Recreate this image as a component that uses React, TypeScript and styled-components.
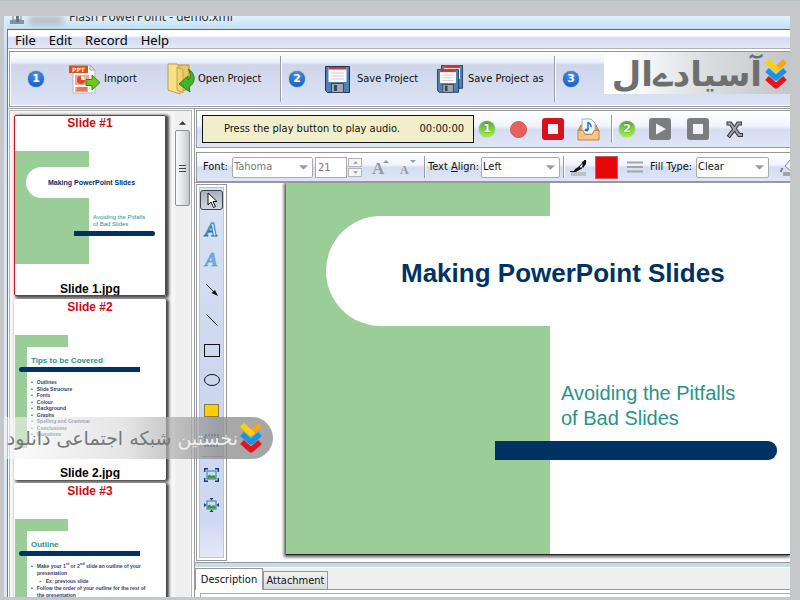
import React from "react";
import styled, { createGlobalStyle, css } from "styled-components";

const GREEN = "#9bcd98";
const NAVY = "#003264";
const TEAL = "#2a9388";
const LINE = "#96989e";
const UI = '"DejaVu Sans Condensed", "Noto Sans", sans-serif';

const GlobalStyle = createGlobalStyle`
  * { box-sizing: border-box; }
  html, body { margin: 0; }
  body { background: #c6c7c9; font: 12px/16px "Noto Sans", sans-serif; color: #111; }
  button, input, select { font: inherit; color: inherit; margin: 0; }
  button { border: 0; padding: 0; background: none; }
`;

const Backdrop = styled.div`
  height: 100vh;
  display: flex;
  padding: 16px 10px 3px 4px;
  border-top: 1px solid #b6bfc2;
  background: #c6c7c9;
`;

const Window = styled.div`
  position: relative;
  flex: 1;
  min-width: 0;
  display: flex;
  flex-direction: column;
  padding-left: 3px;
  margin-top: -1px;
  overflow: hidden;
  background: linear-gradient(#dceefa, #c3dcf2 8%, #dbe7f3 30%, #dbe7f3);
`;

const TitleBar = styled.header`
  flex: none;
  display: flex;
  align-items: flex-end;
  height: 13px;
  padding: 0 3px 4px;
  overflow: hidden;
  font-size: 12px;
  background: linear-gradient(#dff2fb, #c5def2);
  h1 { margin: 0; font: inherit; color: #333; white-space: nowrap; }
  svg { margin-bottom: 1px; }
`;

const Redacted = styled.span`
  width: 34px;
  height: 9px;
  margin: 0 6px 0 5px;
  background: #b3bcc4;
  filter: blur(3px);
`;

const Body = styled.div`
  flex: 1;
  min-height: 0;
  display: flex;
  flex-direction: column;
  border-left: 1px solid #6f7b80;
  border-top: 1px solid #5b6a6c;
  background: #fff;
`;

const Menu = styled.nav`
  flex: none;
  display: flex;
  gap: 13px;
  height: 19px;
  padding-left: 7px;
  border-bottom: 1px solid #b0b2b8;
  background: linear-gradient(#fff 0 30%, #d6dcef 45%, #e3e8f6);
  button { font: 13px/20px "Noto Sans", sans-serif; color: #000; }
`;

const Ribbon = styled.div`
  flex: none;
  display: flex;
  align-items: center;
  height: 56px;
  margin: 2px 0 0 1px;
  padding-left: 18px;
  border: 1px solid ${LINE};
  border-right: 0;
  box-shadow: inset 1px 1px #fff, inset 0 -1px #fff;
  background: linear-gradient(#fff, #edf0f9 18%, #cfd6e9 24%, #d3dbef 55%, #dfe4f4);
`;

const Divider = styled.span<{ $h: number }>`
  flex: none;
  width: 2px;
  height: ${(p) => p.$h}px;
  border-left: 1px solid #9b9da3;
  background: #fff;
`;

const Step = styled.span`
  flex: none;
  width: 16px;
  height: 16px;
  border-radius: 50%;
  text-align: center;
  font: bold 11px/16px "DejaVu Sans", sans-serif;
  color: #fff;
  background: radial-gradient(circle at 50% 25%, #4d93e0, #1a64c4 75%);
  box-shadow: 0 0 1px #1b4f9a;
`;

const GreenStep = styled(Step)`
  text-shadow: 0 0 2px #2b7a10;
  background: linear-gradient(#58a83a, #7fd24a 50%, #a5f52c);
  box-shadow: 0 0 1px #4a8b35;
`;

const RibbonButton = styled.button<{ $w: number; $gap: number }>`
  flex: none;
  display: flex;
  align-items: center;
  gap: ${(p) => p.$gap}px;
  width: ${(p) => p.$w}px;
  font: 11px/16px ${UI};
  white-space: nowrap;
  svg { flex: none; }
`;

const Spacer = styled.span<{ $w: number }>`
  flex: none;
  width: ${(p) => p.$w}px;
`;

const Brand = styled.div`
  flex: 1;
  align-self: flex-start;
  display: flex;
  align-items: center;
  justify-content: flex-end;
  gap: 3px;
  height: 42px;
  padding: 2px 3px 0 0;
  overflow: hidden;
  background: linear-gradient(90deg, #fff 10%, #dcdde0 55%, #c3c6ca);
  span { font: bold 34px/40px "DejaVu Sans", sans-serif; color: #6d6e70; white-space: nowrap; }
  svg { flex: none; }
`;

const Main = styled.main`
  flex: 1;
  min-height: 0;
  display: flex;
  margin-top: 1px;
  border-top: 1px solid ${LINE};
  border-left: 1px solid #fff;
`;

const SlideList = styled.aside`
  flex: none;
  display: flex;
  width: 183px;
  border: 1px solid #b4b5ba;
  border-bottom: 0;
  background: #f6f6f7;
  margin-top: 1px;
  overflow: hidden;
`;

const Cards = styled.div`
  flex: 1;
  display: flex;
  flex-direction: column;
  gap: 3px;
  padding: 4px 9px 0 4px;
`;

const Card = styled.section<{ $active?: boolean }>`
  flex: none;
  display: flex;
  flex-direction: column;
  height: 181px;
  overflow: hidden;
  background: #fff;
  font: bold 12px/14px "Liberation Sans", sans-serif;
  text-align: center;
  border: 1px solid ${(p) => (p.$active ? "#d3131d" : "#fff")};
  border-radius: 2px;
  h2 { margin: 0 0 21px; font: inherit; color: #c80c18; }
  footer { margin-top: 18px; color: #000; }
`;

const CardShadow = styled.div`
  border-radius: 2px;
  box-shadow: 2px 1px 3px 1px #444;
`;

const Thumb = styled.div<{ $split: number }>`
  flex: none;
  height: 113px;
  overflow: hidden;
  text-align: left;
  background: linear-gradient(90deg, ${GREEN} ${(p) => p.$split}px, #fff ${(p) => p.$split}px);
`;

const ThumbPill = styled.div`
  height: 31px;
  margin: 16px 0 0 11px;
  padding-left: 22px;
  border-radius: 16px 0 0 16px;
  background: #fff;
  font: bold 7px/32px "Liberation Sans", sans-serif;
  color: ${NAVY};
`;

const ThumbSub = styled.p`
  margin: 16px 0 0 78px;
  font: 6px/7px "Liberation Sans", sans-serif;
  color: ${TEAL};
`;

const ThumbBar = styled.div`
  height: 5px;
  margin: 3px 10px 0 59px;
  border-radius: 0 3px 3px 0;
  background: ${NAVY};
`;

const ThumbNotch = styled.div`
  height: 100%;
  background: linear-gradient(${GREEN} 12px, transparent 12px) 0 0 / 53px 12px no-repeat;
  padding-top: 12px;
`;

const ThumbSheet = styled.div`
  height: 101px;
  margin-left: 12px;
  padding: 9px 0 0 4px;
  border-radius: 6px 0 0 0;
  background: #fff;
  color: #34406e;
  h3 { margin: 0; font: bold 8px/10px "Liberation Sans", sans-serif; color: ${TEAL}; }
  hr {
    height: 5px;
    margin: 1px 25px 7px -12px;
    border: 0;
    border-radius: 3px 0 0 3px;
    background: ${NAVY};
  }
`;

const Bullets = styled.ul<{ $h: number }>`
  display: flex;
  flex-direction: column;
  justify-content: space-between;
  height: ${(p) => p.$h}px;
  margin: 0;
  padding: 0;
  list-style: none;
  font: bold 5px/6px "Liberation Sans", sans-serif;
  white-space: nowrap;
  li::before { content: "•"; margin-right: 4px; }
  li.more::before { content: ""; margin-right: 6px; }
  li.sub { padding-left: 8px; }
  li.sub::before { content: "–"; }
  sup { font-size: 4px; line-height: 0; }
`;

const Scrollbar = styled.div`
  flex: none;
  display: flex;
  flex-direction: column;
  width: 15px;
  margin-right: 1px;
  background: #efeff0;
  button { height: 19px; }
`;

const ScrollThumb = styled.div`
  display: flex;
  flex-direction: column;
  align-items: center;
  justify-content: center;
  gap: 2px;
  height: 76px;
  border: 1px solid #8d9096;
  border-radius: 2px;
  background: linear-gradient(90deg, #fafafa, #e6e7e9 45%, #c4c6ca);
  i { width: 7px; height: 1px; background: #444; }
`;

const Work = styled.div`
  flex: 1;
  min-width: 0;
  display: flex;
  flex-direction: column;
  margin-left: 2px;
  border-left: 1px solid ${LINE};
`;

const bar = css`
  flex: none;
  display: flex;
  align-items: center;
  overflow: hidden;
  border: 1px solid ${LINE};
  border-right: 0;
  background: linear-gradient(#fff, #f1f4fc 42%, #d5ddf2 52%, #e0e6f7);
  font: 11px/16px ${UI};
  white-space: nowrap;
`;

const AudioBar = styled.div`
  ${bar}
  height: 38px;
  margin: 1px 0 0 1px;
  padding-left: 5px;
`;

const FontBar = styled.div`
  ${bar}
  height: 30px;
  margin: 4px 0 0 1px;
  padding-left: 6px;
`;

const Readout = styled.div`
  flex: none;
  display: flex;
  justify-content: space-between;
  width: 272px;
  height: 28px;
  padding: 0 9px 0 21px;
  border: 1px solid #111;
  background: #f1eecb;
  font: 11px/26px ${UI};
`;

const IconButton = styled.button<{ $w: number }>`
  flex: none;
  display: flex;
  align-items: center;
  justify-content: center;
  width: ${(p) => p.$w}px;
  height: 24px;
`;

const RecordDot = styled.span`
  width: 17px;
  height: 17px;
  border-radius: 50%;
  border: 1px solid #d2544f;
  background: #e8605a;
`;

const StopBox = styled.span<{ $c: string }>`
  width: 22px;
  height: 22px;
  display: flex;
  align-items: center;
  justify-content: center;
  border-radius: 3px;
  background: ${(p) => p.$c};
  &::after { content: ""; width: 10px; height: 10px; background: #f4f4f8; }
`;

const Field = styled.label<{ $w: number }>`
  flex: none;
  width: ${(p) => p.$w}px;
`;

const SelectBox = styled.span<{ $w: number; $muted?: boolean }>`
  flex: none;
  display: flex;
  align-items: center;
  width: ${(p) => p.$w}px;
  height: 21px;
  padding-right: 4px;
  border: 1px solid #a9abb1;
  border-radius: 2px;
  background: #fff;
  color: ${(p) => (p.$muted ? "#777" : "#111")};
  select {
    flex: 1;
    min-width: 0;
    height: 19px;
    padding: 0 0 0 1px;
    border: 0;
    appearance: none;
    background: transparent;
  }
`;

const SizeInput = styled.input`
  flex: none;
  width: 32px;
  height: 21px;
  padding: 0 2px;
  border: 1px solid #a9abb1;
  background: #fff;
  && { color: #777; }
`;

const Spinner = styled.span`
  flex: none;
  display: flex;
  flex-direction: column;
  gap: 1px;
  width: 14px;
  margin: 0 7px 0 1px;
  button {
    display: flex;
    align-items: center;
    justify-content: center;
    height: 9px;
    border: 1px solid #b3b5ba;
    background: #f5f5f7;
  }
`;

const Swatch = styled.button`
  flex: none;
  width: 23px;
  height: 23px;
  margin: 0 9px 0 6px;
  background: #e9060b;
  border: 1px solid #c06058;
`;

const Stage = styled.div`
  flex: 1;
  min-height: 0;
  display: flex;
  margin-top: 0;
  border-top: 1px solid ${LINE};
  border-bottom: 1px solid ${LINE};
  background: #fff;
`;

const PaletteFrame = styled.div`
  flex: none;
  display: flex;
  width: 31px;
  margin: 1px 0 1px 1px;
  padding: 2px;
  border: 1px solid ${LINE};
`;

const Palette = styled.div`
  flex: 1;
  display: flex;
  flex-direction: column;
  align-items: center;
  gap: 10px;
  padding-top: 2px;
  background: linear-gradient(#dbe3f4, #ccd7ee 50%, #cfd8f2 90%, #e4e9f8);
  border: 1px solid #c3c5cc;
  hr { flex: none; width: 22px; height: 1px; margin: -4px 0 -2px; border: 0; background: #8f949e; }
`;

const Tool = styled.button<{ $on?: boolean }>`
  flex: none;
  display: flex;
  align-items: center;
  justify-content: center;
  width: 23px;
  height: 20px;
  border-radius: 3px;
  ${(p) => p.$on && css`
    border: 1px solid #3e434c;
    background: linear-gradient(#a9afbc, #d3d8e3);
  `}
`;

const Canvas = styled.div`
  flex: 1;
  min-width: 0;
  display: flex;
  padding: 0 0 7px 59px;
  overflow: hidden;
`;

const Slide = styled.article`
  flex: 1;
  min-width: 0;
  overflow: hidden;
  white-space: nowrap;
  background: linear-gradient(90deg, ${GREEN} 264px, #fff 264px);
  border-bottom: 1px solid #222;
  box-shadow: -1px 1px 3px 1px #555;
  clip-path: inset(0 0 -6px -6px);
  font-family: "Liberation Sans", sans-serif;
  h2 {
    margin: 33px 0 0 40px;
    padding-left: 75px;
    border-radius: 55px 0 0 55px;
    background: #fff;
    font-size: 26px;
    line-height: 110px;
    height: 110px;
    padding-top: 2px;
    color: ${NAVY};
  }
  p { margin: 55px 0 0 275px; font-size: 20px; line-height: 25px; color: ${TEAL}; }
`;

const SlideBar = styled.div`
  height: 19px;
  margin: 10px 13px 0 209px;
  border-radius: 0 9px 9px 0;
  background: ${NAVY};
`;

const Tabs = styled.div`
  flex: none;
  display: flex;
  align-items: flex-end;
  height: 27px;
  border-top: 4px solid #c9dce2;
  background: #efeff0;
  box-shadow: inset 0 1px #fff;
`;

const Tab = styled.button<{ $on?: boolean }>`
  width: ${(p) => (p.$on ? 68 : 65)}px;
  height: ${(p) => (p.$on ? 22 : 19)}px;
  border: 1px solid ${LINE};
  border-bottom-width: ${(p) => (p.$on ? 0 : 1)}px;
  background: ${(p) => (p.$on ? "#fff" : "linear-gradient(#f2f2f2, #dadada)")};
  font: 11px/17px ${UI};
  white-space: nowrap;
`;

const TabRest = styled.span`
  flex: 1;
  border-bottom: 1px solid ${LINE};
`;

const TabPage = styled.div`
  flex: none;
  height: 7px;
  padding: 3px 0 0 5px;
  background: #fff;
  &::after { content: ""; display: block; height: 4px; border: 1px solid #a9abb1; border-width: 1px 0 0 1px; }
`;

const Ribboned = styled.div`
  position: absolute;
  left: 0;
  bottom: 138px;
  display: flex;
  align-items: center;
  justify-content: flex-end;
  gap: 2px;
  width: 269px;
  height: 42px;
  padding-right: 11px;
  border-radius: 0 22px 22px 0;
  background: linear-gradient(90deg, rgba(250, 250, 250, 0.55), rgba(215, 215, 215, 0.65) 45%, rgba(140, 140, 140, 0.75) 80%, rgba(150, 150, 150, 0.85));
  p { margin: 0; font: 19px/40px "DejaVu Sans", sans-serif; color: #77787a; white-space: nowrap; }
  b { font-weight: normal; color: #eee; }
  svg { flex: none; }
`;

const Chevrons = ({ w, h }: { w: number; h: number }) => (
  <svg width={w} height={h} viewBox="0 0 22 32" fill="none" strokeWidth="5.5" strokeLinejoin="round" aria-hidden="true">
    <path d="M2 3 11 11" stroke="#ffcf0a" />
    <path d="M10 12 20 3" stroke="#f9a41a" />
    <path d="M2 3 11 11 13 9" stroke="#ffcf0a" />
    <path d="M2 12 11 20 20 12" stroke="#1497e0" />
    <path d="M2 20 11 28 20 20" stroke="#e5131b" />
  </svg>
);

const Caret = ({ up, w = 9, c = "#9a9ca0" }: { up?: boolean; w?: number; c?: string }) => (
  <svg width={w} height={Math.ceil(w / 2)} viewBox="0 0 10 5" aria-hidden="true">
    <path d={up ? "M0 5h10L5 0z" : "M0 0h10L5 5z"} fill={c} />
  </svg>
);

const ImportIcon = () => (
  <svg width="31" height="30" viewBox="0 0 31 30">
    <path d="M4 1h17l5 5v23H4z" fill="#fbfbfb" stroke="#b9b9bd" />
    <path d="M21 1v5h5z" fill="#ddd" stroke="#aaa" />
    <rect x="0" y="1.500" width="19" height="7.500" fill="#d3521d" />
    <text x="9.500" y="7.500" fontSize="6" fontWeight="bold" fill="#ffe9c0" textAnchor="middle" fontFamily="DejaVu Sans">PPT</text>
    <path d="M6 11h14v10H6zM6 23h13v5H6z" fill="#f6a490" />
    <circle cx="12" cy="16" r="4" fill="#e0452a" />
    <path d="M12 16v-4a4 4 0 0 1 4 4z" fill="#fff" />
    <path d="M8 24h10M8 26h10" stroke="#d7452c" />
    <path d="M17 15.500h6v-4.500l8 7.500-8 7.500v-4.500h-6z" fill="#6cc81e" stroke="#2f8b10" />
  </svg>
);

const FolderIcon = () => (
  <svg width="28" height="32" viewBox="0 0 28 32">
    <path d="M9 2h13v25H9z" fill="#e8c75e" stroke="#b6913a" />
    <path d="M1 1h9l2 3 1 27-12-4z" fill="#f7e28a" stroke="#c19d45" />
    <path d="M10 4l6 3v23l-6-3z" fill="#f0d273" stroke="#c6a24b" />
    <path d="M21 6c8 4 8 14 1 18l1 5-11-8 9-8 0 4c3-2 3-7 0-11z" fill="#3fb52a" stroke="#1f8416" />
  </svg>
);

const Floppy = ({ x = 0, y = 0, s = 1 }) => (
  <g transform={`translate(${x} ${y}) scale(${s})`}>
    <path d="M.5.5h24v26h-22l-2-2z" fill="#4d80b5" stroke="#1b3556" />
    <rect x="3.500" y="1" width="18" height="15" fill="#fff" />
    <rect x="3.500" y="1" width="18" height="2.500" fill="#d8352b" />
    <path d="M6 7h13M6 10h13M6 13h13" stroke="#c5c9cf" />
    <rect x="6.500" y="17.500" width="12" height="9" fill="#a4a8ad" stroke="#3c4550" />
    <rect x="9" y="19" width="3" height="6" fill="#33465c" />
  </g>
);

const SaveIcon = () => (
  <svg width="25" height="27" viewBox="0 0 25 27"><Floppy /></svg>
);

const SaveAsIcon = () => (
  <svg width="27" height="28" viewBox="0 0 27 28"><Floppy x={4} s={0.88} /><Floppy y={4} s={0.88} /></svg>
);

const TrayIcon = () => (
  <svg width="23" height="23" viewBox="0 0 23 23">
    <path d="M1 13 4 7h15l3 6z" fill="#d99a55" stroke="#b87c3c" />
    <path d="M5 1h9l4 4v11H5z" fill="#f3f8fd" stroke="#9fb2c4" />
    <path d="M11 12V4c1 2 4 2 3 5" stroke="#1f72c8" strokeWidth="1.500" fill="none" />
    <ellipse cx="9.500" cy="12" rx="2" ry="1.600" fill="#1f72c8" />
    <path d="M1 12.500h5l2 4h7l2-4h5v9.500H1z" fill="#f4c48a" stroke="#c08647" />
  </svg>
);

const PlayIcon = () => (
  <svg width="22" height="22" viewBox="0 0 22 22">
    <rect width="22" height="22" rx="3" fill="#7c7d80" />
    <path d="M7 5.500 17 11 7 16.500z" fill="#f4f4f8" />
  </svg>
);

const CrossIcon = () => (
  <svg width="17" height="17" viewBox="0 0 17 17" fill="none" strokeLinecap="square">
    <path d="M2.500 2.500h2l3.500 5 1.500 1.500 3.500 5h2M14 2.500h-2l-3 4.500-2 3-3.500 4.500" stroke="#36383b" strokeWidth="4" />
    <path d="M2.500 2.500h2l3.500 5 1.500 1.500 3.500 5h2M14 2.500h-2l-3 4.500-2 3-3.500 4.500" stroke="#a2a4a7" strokeWidth="2" />
  </svg>
);

const LetterSize = ({ up }: { up?: boolean }) => (
  <svg width="18" height="17" viewBox="0 0 18 17">
    <text x="0" y="15" fontSize={up ? 17 : 12} fontWeight="bold" fontFamily="Liberation Serif" fill="#97999d">A</text>
    <path d={up ? "M11 4h6l-3-3z" : "M10 1h6l-3 3z"} fill="#97999d" />
  </svg>
);

const BrushIcon = () => (
  <svg width="18" height="17" viewBox="0 0 18 17">
    <path d="M15 1 9 8l2 2 5-8z" fill="#fff" stroke="#111" />
    <path d="M10 7 5 10l-1 2H0v1h6l5-3z" fill="#111" />
    <path d="M12 3l4-2v4l-3 4z" fill="#111" />
    <rect x="1" y="13" width="15" height="4" fill="#bfc0c3" />
  </svg>
);

const BucketIcon = () => (
  <svg width="18" height="17" viewBox="0 0 18 17">
    <path d="M6 7 11 1l6 5-5 6z" fill="#eee" stroke="#888" />
    <path d="M2 10h2M1 12h2" stroke="#222" />
    <rect x="4" y="13" width="14" height="4" fill="#a5a6a9" />
  </svg>
);

const LinesIcon = () => (
  <svg width="16" height="12" viewBox="0 0 16 12"><path d="M0 1.500h16M0 6h16M0 10.500h16" stroke="#a2a4a8" strokeWidth="2" /></svg>
);

const PictureIcon = ({ fit }: { fit?: boolean }) => (
  <svg width="15" height="14" viewBox="0 0 15 14">
    <rect x="3" y="3" width="9" height="8" fill="#bfe3f5" stroke="#3b74a5" />
    <path d="M3.500 10.500V8l2-1.500 2 1.500 2-1 2 1v2.500z" fill="#3f9a36" />
    {fit ? (
      <path d="M5.500 0h4l-2 2.500zM5.500 14h4l-2-2.500zM0 5v4l2.500-2zM15 5v4l-2.500-2z" fill="#133a72" />
    ) : (
      <path d="M.7 4V.7H4M11 .7h3.300V4M14.300 10v3.300H11M4 13.300H.7V10" fill="none" stroke="#133a72" strokeWidth="1.400" />
    )}
  </svg>
);

const LetterA = ({ solid }: { solid?: boolean }) => (
  <svg width="18" height="18" viewBox="0 0 18 18">
    <text x="2" y="15" fontSize="19" fontWeight="bold" fontStyle="italic" fontFamily="Liberation Serif" fill={solid ? "#6fb0e0" : "#dff1fb"} stroke={solid ? "#4f93cb" : "#1e7cb4"} strokeWidth={solid ? 0.5 : 1}>A</text>
  </svg>
);

const tools: { name: string; icon: React.ReactNode }[] = [
  {
    name: "Select",
    icon: (
      <svg width="12" height="17" viewBox="0 0 12 17">
        <path d="M2 1v12l3-3 2.500 5.500 2-1L7 9.500h4z" fill="#fff" stroke="#111" />
      </svg>
    ),
  },
  { name: "Outlined text", icon: <LetterA /> },
  { name: "Text", icon: <LetterA solid /> },
  {
    name: "Arrow",
    icon: (
      <svg width="14" height="14" viewBox="0 0 14 14">
        <path d="M1 1 12 12" stroke="#222" />
        <path d="M13 13 6.500 10 10 7z" fill="#111" />
      </svg>
    ),
  },
  { name: "Line", icon: <svg width="12" height="12" viewBox="0 0 12 12"><path d="M.5.5l11 11" stroke="#111" /></svg> },
  { name: "Rectangle", icon: <svg width="16" height="13" viewBox="0 0 16 13"><rect x=".5" y=".5" width="15" height="12" fill="none" stroke="#111" /></svg> },
  { name: "Ellipse", icon: <svg width="16" height="12" viewBox="0 0 16 12"><ellipse cx="8" cy="6" rx="7.500" ry="5.500" fill="none" stroke="#111" /></svg> },
  { name: "Highlight", icon: <svg width="15" height="13" viewBox="0 0 15 13"><rect x=".5" y=".5" width="14" height="12" fill="#ffcd07" stroke="#8a7a3c" /></svg> },
  { name: "Marquee", icon: <svg width="15" height="13" viewBox="0 0 15 13"><rect x="1" y="1" width="13" height="11" fill="#b5c7e6" stroke="#2c4d88" strokeWidth="1.500" strokeDasharray="2 1" /></svg> },
];

const topics = ["Outlines", "Slide Structure", "Fonts", "Colour", "Background", "Graphs", "Spelling and Grammar", "Conclusions", "Questions"];

function SlideCard({ n, active, children }: { n: number; active?: boolean; children: React.ReactNode }) {
  return (
    <CardShadow>
      <Card $active={active}>
        <h2>Slide #{n}</h2>
        {children}
        <footer>Slide {n}.jpg</footer>
      </Card>
    </CardShadow>
  );
}

export default function App() {
  return (
    <Backdrop>
      <GlobalStyle />
      <Window>
        <TitleBar>
          <svg width="14" height="13" viewBox="0 0 14 13" aria-hidden="true">
            <path d="M3 0h8v9H3z" fill="#e9eef2" stroke="#788592" />
            <path d="M0 9h14v4H0z" fill="#8292a1" />
            <path d="M6 3h3v8H6z" fill="#5d7386" />
          </svg>
          <Redacted />
          <h1>Flash PowerPoint - demo.xml</h1>
        </TitleBar>
        <Body>
          <Menu>
            <button>File</button>
            <button>Edit</button>
            <button>Record</button>
            <button>Help</button>
          </Menu>
          <Ribbon>
            <Step>1</Step>
            <Spacer $w={25} />
            <RibbonButton $w={98} $gap={4}><ImportIcon />Import</RibbonButton>
            <RibbonButton $w={113} $gap={3}><FolderIcon />Open Project</RibbonButton>
            <Divider $h={46} />
            <Spacer $w={7} />
            <Step>2</Step>
            <Spacer $w={20} />
            <RibbonButton $w={112} $gap={7}><SaveIcon />Save Project</RibbonButton>
            <RibbonButton $w={117} $gap={4}><SaveAsIcon />Save Project as</RibbonButton>
            <Divider $h={46} />
            <Spacer $w={7} />
            <Step>3</Step>
            <Spacer $w={25} />
            <Brand>
              <span dir="rtl" lang="fa">آسیادےال</span>
              <Chevrons w={22} h={32} />
            </Brand>
          </Ribbon>
          <Main>
            <SlideList>
              <Cards>
                <SlideCard n={1} active>
                  <Thumb $split={74}>
                    <ThumbPill>Making PowerPoint Slides</ThumbPill>
                    <ThumbSub>Avoiding the Pitfalls<br />of Bad Slides</ThumbSub>
                    <ThumbBar />
                  </Thumb>
                </SlideCard>
                <SlideCard n={2}>
                  <Thumb $split={12}>
                    <ThumbNotch>
                      <ThumbSheet>
                        <h3>Tips to be Covered</h3>
                        <hr />
                        <Bullets $h={58}>{topics.map((t) => <li key={t}>{t}</li>)}</Bullets>
                      </ThumbSheet>
                    </ThumbNotch>
                  </Thumb>
                </SlideCard>
                <SlideCard n={3}>
                  <Thumb $split={12}>
                    <ThumbNotch>
                      <ThumbSheet>
                        <h3>Outline</h3>
                        <hr />
                        <Bullets $h={35}>
                          <li>Make your 1<sup>st</sup> or 2<sup>nd</sup> slide an outline of your</li>
                          <li className="more">presentation</li>
                          <li className="sub">Ex: previous slide</li>
                          <li>Follow the order of your outline for the rest of</li>
                          <li className="more">the presentation</li>
                        </Bullets>
                      </ThumbSheet>
                    </ThumbNotch>
                  </Thumb>
                </SlideCard>
              </Cards>
              <Scrollbar>
                <button aria-label="Scroll up"><Caret up w={7} c="#333" /></button>
                <ScrollThumb><i /><i /><i /></ScrollThumb>
              </Scrollbar>
            </SlideList>
            <Work>
              <AudioBar>
                <Readout><span>Press the play button to play audio.</span><time>00:00:00</time></Readout>
                <Spacer $w={5} />
                <GreenStep>1</GreenStep>
                <Spacer $w={6} />
                <IconButton $w={34} aria-label="Record"><RecordDot /></IconButton>
                <IconButton $w={36} aria-label="Stop recording"><StopBox $c="#d8121d" /></IconButton>
                <IconButton $w={34} aria-label="Import audio"><TrayIcon /></IconButton>
                <Spacer $w={6} />
                <Divider $h={28} />
                <Spacer $w={6} />
                <GreenStep>2</GreenStep>
                <Spacer $w={6} />
                <IconButton $w={38} aria-label="Play"><PlayIcon /></IconButton>
                <IconButton $w={38} aria-label="Stop"><StopBox $c="#7c7d80" /></IconButton>
                <IconButton $w={34} aria-label="Delete audio"><CrossIcon /></IconButton>
              </AudioBar>
              <FontBar>
                <Field $w={29} htmlFor="font">Font:</Field>
                <SelectBox $w={81} $muted>
                  <select id="font"><option>Tahoma</option></select>
                  <Caret />
                </SelectBox>
                <Spacer $w={2} />
                <SizeInput aria-label="Font size" defaultValue="21" />
                <Spinner>
                  <button aria-label="Larger"><Caret up w={5} /></button>
                  <button aria-label="Smaller"><Caret w={5} /></button>
                </Spinner>
                <IconButton $w={24} aria-label="Grow font"><LetterSize up /></IconButton>
                <IconButton $w={31} aria-label="Shrink font"><LetterSize /></IconButton>
                <Divider $h={22} />
                <Spacer $w={2} />
                <Field $w={53} htmlFor="align">Text <u>A</u>lign:</Field>
                <SelectBox $w={79}>
                  <select id="align"><option>Left</option></select>
                  <Caret />
                </SelectBox>
                <Spacer $w={3} />
                <Divider $h={22} />
                <Spacer $w={4} />
                <IconButton $w={20} aria-label="Line colour"><BrushIcon /></IconButton>
                <Swatch aria-label="Red" />
                <IconButton $w={16} aria-label="Line width"><LinesIcon /></IconButton>
                <Spacer $w={7} />
                <Field $w={46} htmlFor="fill">Fill T<u>y</u>pe:</Field>
                <SelectBox $w={73}>
                  <select id="fill"><option>Clear</option></select>
                  <Caret />
                </SelectBox>
                <Spacer $w={10} />
                <IconButton $w={18} aria-label="Fill colour"><BucketIcon /></IconButton>
              </FontBar>
              <Stage>
                <PaletteFrame>
                  <Palette>
                    {tools.map((t, i) => <Tool key={t.name} $on={i === 0} aria-label={t.name}>{t.icon}</Tool>)}
                    <hr />
                    <Tool aria-label="Fit to slide"><PictureIcon /></Tool>
                    <Tool aria-label="Actual size"><PictureIcon fit /></Tool>
                  </Palette>
                </PaletteFrame>
                <Canvas>
                  <Slide>
                    <h2>Making PowerPoint Slides</h2>
                    <p>Avoiding the Pitfalls<br />of Bad Slides</p>
                    <SlideBar />
                  </Slide>
                </Canvas>
              </Stage>
              <Tabs role="tablist">
                <Tab role="tab" aria-selected $on>Description</Tab>
                <Tab role="tab" aria-selected={false}>Attachment</Tab>
                <TabRest />
              </Tabs>
              <TabPage role="tabpanel" />
            </Work>
          </Main>
        </Body>
        <Ribboned>
          <p dir="rtl" lang="fa"><b>نخستین</b> شبکه اجتماعی دانلود</p>
          <Chevrons w={22} h={32} />
        </Ribboned>
      </Window>
    </Backdrop>
  );
}
